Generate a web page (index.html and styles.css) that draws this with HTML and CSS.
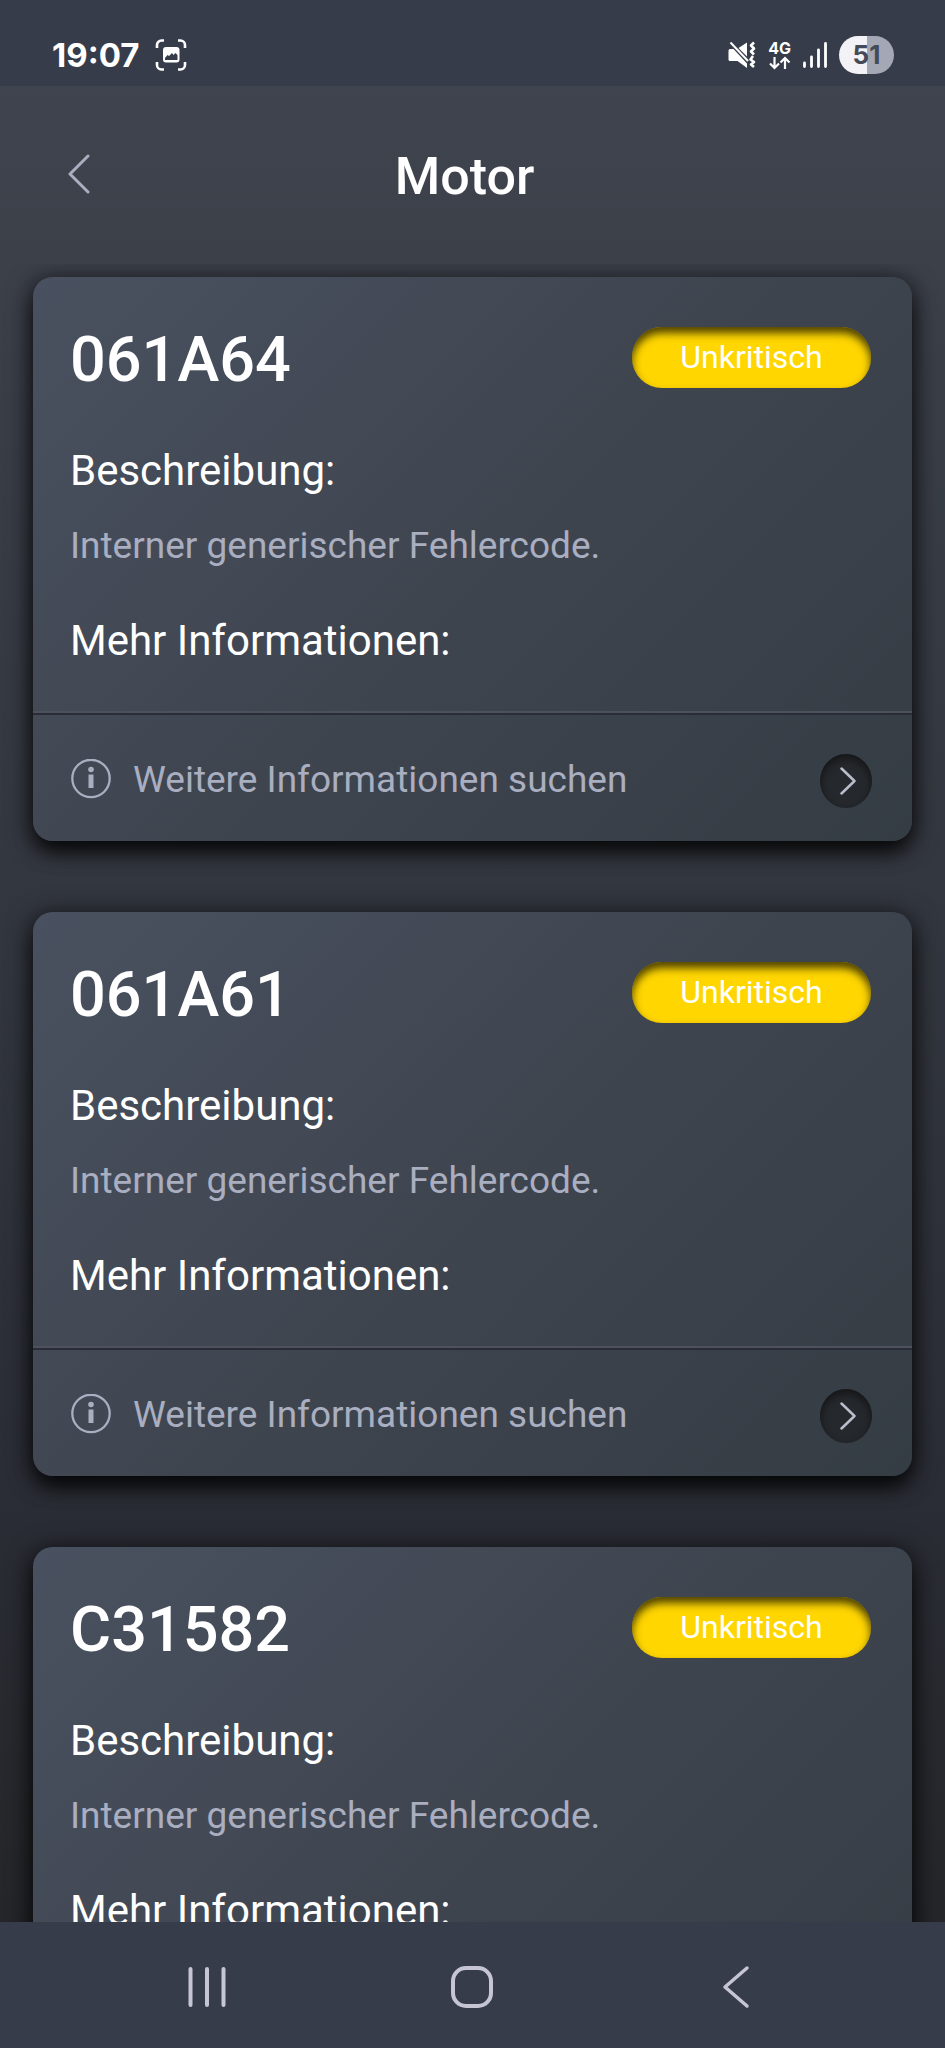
FILE: index.html
```html
<!DOCTYPE html>
<html lang="de">
<head>
<meta charset="utf-8">
<meta name="viewport" content="width=device-width, initial-scale=1">
<title>Motor</title>
<link rel="stylesheet" href="styles.css">
</head>
<body>
<div class="screen">
  <div class="status-bar">
    <div class="status-group">
      <time class="clock">19:07</time>
      <svg width="32" height="32" viewBox="0 0 32 32" aria-hidden="true">
        <path d="M2 9V6a4.500 4.500 0 0 1 4.500-4.500H9M23 1.500h2.500A4.500 4.500 0 0 1 30 6v3M30 23v3a4.500 4.500 0 0 1-4.500 4.500H23M9 30.500H6.500A4.500 4.500 0 0 1 2 26v-3" fill="none" stroke="#fff" stroke-width="2.600"/>
        <path fill-rule="evenodd" fill="#fff" d="M11 8h10.500a3 3 0 0 1 3 3v9.500a3 3 0 0 1-3 3H11a3 3 0 0 1-3-3V11a3 3 0 0 1 3-3zM10 19v2h12.500V16l-2-2-2 2-1.500-2-3 3-1.500-1z"/>
      </svg>
    </div>
    <div class="status-group status-right">
      <svg width="28" height="28" viewBox="0 0 28 28" aria-hidden="true">
        <path d="M2 8h3.500L19 22.500V27L9.500 20H2a1.500 1.500 0 0 1-1.500-1.500v-9A1.500 1.500 0 0 1 2 8zM19 1.500v14L10.500 7z" fill="#fff"/>
        <path d="M2.500 1.500L20 20" fill="none" stroke="#fff" stroke-width="2"/>
        <path d="M26 1.500l-3 3 3 3-3 3 3 3M25 15l-2.500 3.500 3.500 2.500-3 2.500 3 2.500" fill="none" stroke="#fff" stroke-width="2.600" stroke-linejoin="round"/>
      </svg>
      <div class="network">
        <span>4G</span>
        <svg width="22" height="14" viewBox="0 0 22 14" aria-hidden="true"><path d="M5.500 1v11M1 7.500L5.500 12 10 7.500M16 13V2M11.500 6.500L16 2l4.500 4.500" fill="none" stroke="#fff" stroke-width="2.200"/></svg>
      </div>
      <svg width="24" height="26" viewBox="0 0 24 26" aria-hidden="true"><path d="M1.500 21v3.500M8.500 15v9.500M15.500 8v16.500M22.500 1.500v23" stroke="#fff" stroke-width="2.800" stroke-linecap="round"/></svg>
      <span class="battery">51</span>
    </div>
  </div>

  <header class="app-bar">
    <button class="back" type="button" aria-label="Zurück">
      <svg width="22" height="40" viewBox="0 0 22 40" aria-hidden="true"><path d="M20 2L2 20l18 18" fill="none" stroke="#a9aec0" stroke-width="3" stroke-linecap="round" stroke-linejoin="round"/></svg>
    </button>
    <h1 class="title">Motor</h1>
  </header>

  <main class="faults">
    <article class="card">
      <div class="card-body">
        <div class="card-head"><h2 class="code">061A64</h2><span class="badge">Unkritisch</span></div>
        <h3 class="label">Beschreibung:</h3>
        <p class="text">Interner generischer Fehlercode.</p>
        <h3 class="label">Mehr Informationen:</h3>
      </div>
      <button class="more" type="button">
        <svg width="40" height="40" viewBox="0 0 40 40" aria-hidden="true"><circle cx="20" cy="19.500" r="18.700" fill="none" stroke="#a9aec0" stroke-width="2.300"/><circle cx="20" cy="10.500" r="2.800" fill="#a9aec0"/><path d="M20 15.500v13.500" stroke="#a9aec0" stroke-width="5"/></svg>
        <span class="more-text">Weitere Informationen suchen</span>
        <span class="arrow"><svg width="16" height="28" viewBox="0 0 16 28" aria-hidden="true"><path d="M1.500 1.500L14.500 14l-13 12.500" fill="none" stroke="#b9bdcc" stroke-width="2.500" stroke-linecap="round" stroke-linejoin="round"/></svg></span>
      </button>
    </article>

    <article class="card">
      <div class="card-body">
        <div class="card-head"><h2 class="code">061A61</h2><span class="badge">Unkritisch</span></div>
        <h3 class="label">Beschreibung:</h3>
        <p class="text">Interner generischer Fehlercode.</p>
        <h3 class="label">Mehr Informationen:</h3>
      </div>
      <button class="more" type="button">
        <svg width="40" height="40" viewBox="0 0 40 40" aria-hidden="true"><circle cx="20" cy="19.500" r="18.700" fill="none" stroke="#a9aec0" stroke-width="2.300"/><circle cx="20" cy="10.500" r="2.800" fill="#a9aec0"/><path d="M20 15.500v13.500" stroke="#a9aec0" stroke-width="5"/></svg>
        <span class="more-text">Weitere Informationen suchen</span>
        <span class="arrow"><svg width="16" height="28" viewBox="0 0 16 28" aria-hidden="true"><path d="M1.500 1.500L14.500 14l-13 12.500" fill="none" stroke="#b9bdcc" stroke-width="2.500" stroke-linecap="round" stroke-linejoin="round"/></svg></span>
      </button>
    </article>

    <article class="card">
      <div class="card-body">
        <div class="card-head"><h2 class="code">C31582</h2><span class="badge">Unkritisch</span></div>
        <h3 class="label">Beschreibung:</h3>
        <p class="text">Interner generischer Fehlercode.</p>
        <h3 class="label">Mehr Informationen:</h3>
      </div>
      <button class="more" type="button" aria-label="Weitere Informationen suchen"></button>
    </article>
  </main>

  <nav class="nav-bar" aria-label="System">
    <button type="button" aria-label="Letzte Apps"><svg width="42" height="42" viewBox="0 0 42 42" aria-hidden="true"><path d="M4.500 3v36M21 3v36M37.500 3v36" stroke="#c5c5d3" stroke-width="4" stroke-linecap="round"/></svg></button>
    <button type="button" aria-label="Startseite"><svg width="44" height="44" viewBox="0 0 44 44" aria-hidden="true"><rect x="3" y="3" width="38" height="38" rx="13" fill="none" stroke="#c5c5d3" stroke-width="4"/></svg></button>
    <button type="button" aria-label="Zurück"><svg width="28" height="44" viewBox="0 0 28 44" aria-hidden="true"><path d="M25 3L3 22l22 19" fill="none" stroke="#c5c5d3" stroke-width="3.500" stroke-linecap="round" stroke-linejoin="round"/></svg></button>
  </nav>
</div>
</body>
</html>
```

FILE: styles.css
```css
* { box-sizing: border-box; }

body {
  margin: 0;
  font-family: Roboto, "Noto Sans", sans-serif;
  color: #fff;
}

h1, h2, h3, p { margin: 0; }

button {
  padding: 0;
  border: 0;
  background: none;
  color: inherit;
  font: inherit;
}

svg { display: block; flex: none; }

.screen {
  display: flex;
  flex-direction: column;
  height: 100vh;
  overflow: hidden;
  background: linear-gradient(#40444e 4%, #3a3e47 18%, #33373f 42%, #2a2d35 72%, #242629 94%);
}

/* System status bar */
.status-bar {
  display: flex;
  justify-content: space-between;
  padding: 24px 51px 0 52px;
  height: 86px;
  background: #373c4b;
}

.status-group {
  display: flex;
  align-items: center;
  gap: 16px;
  height: 62px;
}

.status-right { gap: 12px; }

.clock {
  font: 700 33px/40px Inter, sans-serif;
}

.network {
  display: flex;
  flex-direction: column;
  align-items: center;
  font: 700 16px/16px Inter, sans-serif;
}

.battery {
  width: 55px;
  border-radius: 19px;
  background: linear-gradient(90deg, #f3f3f7 50%, #a4a8b4 50%);
  color: #454a58;
  font: 700 26px/38px Inter, sans-serif;
  text-align: center;
}

/* App header */
.app-bar {
  display: grid;
  grid-template-columns: 1fr auto 1fr;
  align-items: center;
  height: 178px;
  padding: 0 32px 0 16px;
}

.back {
  justify-self: start;
  padding: 32px 52px 34px;
}

.title {
  padding-top: 4px;
  font-size: 52px;
  line-height: 64px;
  font-weight: 500;
}

/* Fault list */
.faults {
  flex: 1;
  min-height: 0;
  display: flex;
  flex-direction: column;
  gap: 71px;
  padding: 13px 33px 0;
  overflow: hidden;
}

.card {
  flex: none;
  border-radius: 20px;
  background: linear-gradient(135deg, #495160, #3f454f 50%, #343c44);
  box-shadow: 0 14px 20px -4px rgba(0, 0, 0, 0.7), 0 4px 24px 2px rgba(0, 0, 0, 0.65);
}

.card-body {
  padding: 46px 41px 44px 37px;
}

.card-head {
  display: flex;
  align-items: flex-start;
  justify-content: space-between;
  margin-bottom: 48px;
}

.code {
  font-size: 63px;
  line-height: 74px;
  font-weight: 500;
}

.badge {
  width: 239px;
  margin-top: 4px;
  border-radius: 30px;
  background: #ffd600;
  box-shadow: inset 0 6px 8px rgba(0, 0, 0, 0.7);
  font-size: 32px;
  line-height: 61px;
  text-align: center;
}

.label {
  font-size: 42px;
  line-height: 52px;
  font-weight: 400;
}

.text {
  margin: 24px 0 44px;
  color: #a9aec0;
  font-size: 37px;
  line-height: 50px;
}

.more {
  display: flex;
  align-items: center;
  width: 100%;
  height: 130px;
  padding: 3px 40px 0 38px;
  border-top: 2px solid #4d515c;
  border-radius: 0;
  box-shadow: inset 0 2px 0 #2a2d37;
  text-align: left;
}

.more-text {
  flex: 1;
  padding: 2px 0 0 22px;
  color: #a9aec0;
  font-size: 37px;
  line-height: 50px;
}

.arrow {
  display: grid;
  place-items: center;
  width: 52px;
  height: 54px;
  margin-top: 4px;
  padding-left: 4px;
  border-radius: 50%;
  background: #25282c;
  box-shadow: inset 0 4px 8px rgba(0, 0, 0, 0.5);
}

/* System navigation */
.nav-bar {
  display: grid;
  grid-template-columns: repeat(3, 28%);
  justify-content: center;
  height: 126px;
  padding: 4px 2px 0 0;
  background: #373c4b;
}

.nav-bar button {
  display: grid;
  place-items: center;
}
```
